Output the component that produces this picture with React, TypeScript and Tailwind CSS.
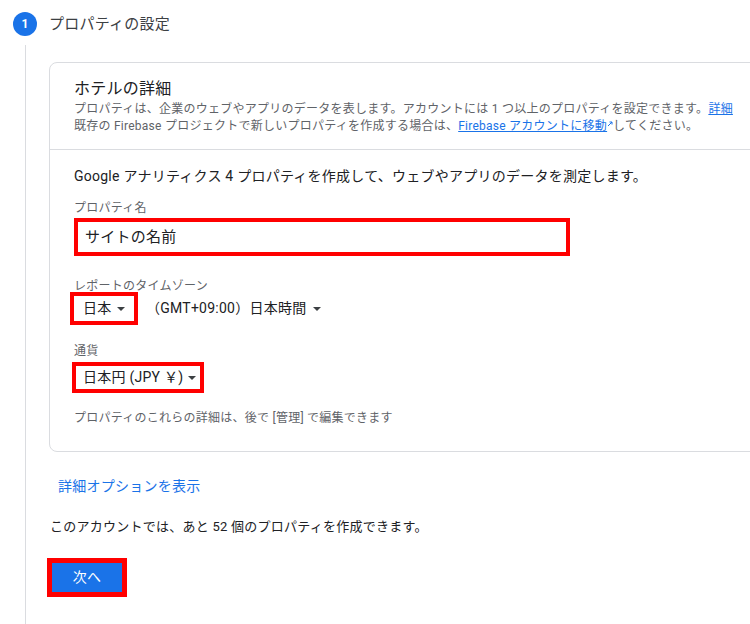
import React from "react";

const font = { fontFamily: 'Roboto, "Noto Sans CJK JP", sans-serif' };

function Caret() {
  return (
    <span className="inline-block w-0 h-0 border-x-[4px] border-x-transparent border-t-[4px] border-t-[#3c4043] align-middle" />
  );
}

export default function App() {
  return (
    <div className="w-[750px] h-[624px] overflow-hidden bg-white text-[#202124] tracking-[0.25px]" style={font}>
      <div className="flex items-center pl-[13px] pt-[12px] gap-[12px]">
        <div className="w-[24px] h-[24px] rounded-full bg-[#1a73e8] text-white text-[12px] font-bold flex items-center justify-center">
          1
        </div>
        <div className="text-[15px] leading-[24px] text-[#3c4043]">プロパティの設定</div>
      </div>
      <div className="ml-[25px] mt-[9px] border-l border-[#dadce0] pl-[23px] pt-[17px] h-[600px]">
        <div className="w-[740px] rounded-[8px] border border-[#dadce0]">
          <div className="px-[24px] pt-[14px] pb-[14px] border-b border-[#dadce0]">
            <div className="text-[16px] leading-[24px] text-[#202124]">ホテルの詳細</div>
            <div className="text-[12px] leading-[17px] text-[#5f6368] whitespace-nowrap">
              プロパティは、企業のウェブやアプリのデータを表します。アカウントには 1 つ以上のプロパティを設定できます。
              <span className="text-[#1a73e8] underline">詳細</span>
            </div>
            <div className="text-[12px] leading-[17px] text-[#5f6368] whitespace-nowrap">
              既存の Firebase プロジェクトで新しいプロパティを作成する場合は、
              <span className="text-[#1a73e8] underline">Firebase アカウントに移動</span>
              <svg width="6" height="6" viewBox="0 0 6 6" className="inline-block align-top mt-[3px]">
                <path d="M1 5 L5 1 M2.5 1 H5 V3.5" stroke="#1a73e8" strokeWidth="1" fill="none" />
              </svg>
              してください。
            </div>
          </div>
          <div className="px-[24px] pt-[16px] pb-[25px]">
            <div className="text-[14px] leading-[20px] text-[#202124]">
              Google アナリティクス 4 プロパティを作成して、ウェブやアプリのデータを測定します。
            </div>
            <div className="mt-[14px] text-[12px] leading-[16px] text-[#5f6368]">プロパティ名</div>
            <div className="mt-[2px] w-[496px] h-[38px] border-[4px] border-[#ff0000] flex items-center pl-[7px] text-[15px] text-[#202124]">
              サイトの名前
            </div>
            <div className="mt-[22px] text-[12px] leading-[16px] text-[#5f6368]">レポートのタイムゾーン</div>
            <div className="-mt-[2px] -ml-[4px] flex items-center">
              <div className="w-[68px] h-[33px] border-[4px] border-[#ff0000] flex items-center pl-[9px] gap-[5px] text-[14px]">
                <span>日本</span>
                <Caret />
              </div>
              <div className="ml-[8px] flex items-center gap-[7px] text-[14px]">
                <span>（GMT+09:00）日本時間</span>
                <Caret />
              </div>
            </div>
            <div className="mt-[18px] text-[12px] leading-[16px] text-[#5f6368]">通貨</div>
            <div className="mt-[3px] -ml-[2px] w-[132px] h-[31px] border-[4px] border-[#ff0000] flex items-center pl-[7px] gap-[5px] text-[14px]">
              <span>日本円 (JPY ￥)</span>
              <Caret />
            </div>
            <div className="mt-[17px] text-[12px] leading-[16px] text-[#5f6368]">
              プロパティのこれらの詳細は、後で [管理] で編集できます
            </div>
          </div>
        </div>
        <div className="mt-[24px] ml-[9px] text-[14px] leading-[20px] text-[#1a73e8]">詳細オプションを表示</div>
        <div className="mt-[22px] ml-[1px] text-[13px] leading-[18px] text-[#202124]">
          このアカウントでは、あと 52 個のプロパティを作成できます。
        </div>
        <div className="mt-[22px] -ml-[2px] w-[80px] h-[39px] border-[5px] border-[#ff0000] bg-[#1a73e8] flex items-center justify-center text-white text-[14px]">
          次へ
        </div>
      </div>
    </div>
  );
}
